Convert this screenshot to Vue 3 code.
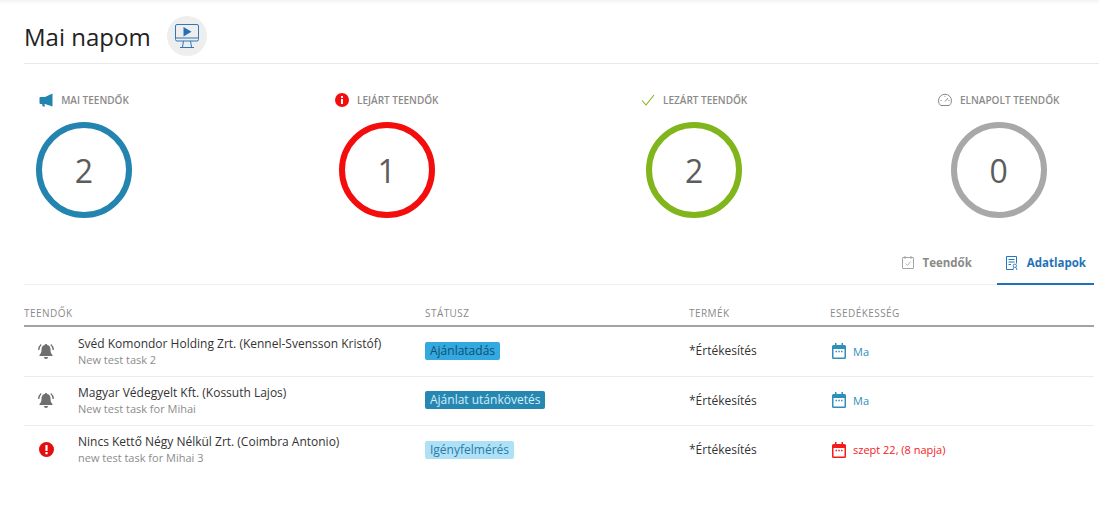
<script setup>
const stats = [
  { label: 'MAI TEENDŐK', value: 2, color: '#2384b0', icon: 'mega' },
  { label: 'LEJÁRT TEENDŐK', value: 1, color: '#f40d0d', icon: 'info' },
  { label: 'LEZÁRT TEENDŐK', value: 2, color: '#80b51b', icon: 'check' },
  { label: 'ELNAPOLT TEENDŐK', value: 0, color: '#a8a8a8', icon: 'gauge' }
]
const rows = [
  { icon: 'bell', name: 'Svéd Komondor Holding Zrt. (Kennel-Svensson Kristóf)', sub: 'New test task 2', status: 'Ajánlatadás', cls: 'b1', due: 'Ma', late: false },
  { icon: 'bell', name: 'Magyar Védegyelt Kft. (Kossuth Lajos)', sub: 'New test task for Mihai', status: 'Ajánlat utánkövetés', cls: 'b2', due: 'Ma', late: false },
  { icon: 'alert', name: 'Nincs Kettő Négy Nélkül Zrt. (Coimbra Antonio)', sub: 'new test task for Mihai 3', status: 'Igényfelmérés', cls: 'b3', due: 'szept 22, (8 napja)', late: true }
]
</script>

<template>
  <div class="page">
    <header class="head">
      <h1>Mai napom</h1>
      <span class="video">
        <svg width="26" height="26" viewBox="0 0 26 26" fill="none" stroke="#2f78b7" stroke-width="1">
          <rect x="1.5" y="1.5" width="23" height="16.5" rx="1.5" />
          <path d="M1.5 15h23M9.5 18l-1 6M16.5 18l1 6M6 24.5h14" />
          <path d="M9.5 4l8 4.8-8 4.8z" fill="#2470b3" stroke="none" />
        </svg>
      </span>
    </header>

    <section class="stats">
      <div v-for="s in stats" :key="s.label" class="stat">
        <div class="stat-label">
          <span class="stat-icon">
            <svg v-if="s.icon === 'mega'" width="14" height="14" viewBox="0 0 14 14">
              <path d="M13.500 .500v13L6 11H1.500A1 1 0 0 1 .500 10V5a1 1 0 0 1 1-1H6z" fill="#2384b0" />
              <path d="M3 11h2.400l.6 2.400H3.800z" fill="#2384b0" />
            </svg>
            <svg v-else-if="s.icon === 'info'" width="14" height="14" viewBox="0 0 14 14">
              <circle cx="7" cy="7" r="7" fill="#f40d0d" />
              <rect x="6" y="6" width="2" height="5" fill="#fff" />
              <rect x="6" y="3" width="2" height="2" fill="#fff" />
            </svg>
            <svg v-else-if="s.icon === 'check'" width="14" height="14" viewBox="0 0 14 14" fill="none">
              <path d="M1 7.500l4 4.500 8-10" stroke="#80b51b" stroke-width="1.100" />
            </svg>
            <svg v-else width="14" height="14" viewBox="0 0 14 14" fill="none" stroke="#8a8a8a" stroke-width="1">
              <path d="M2.600 12.500h8.800a6.500 6.500 0 1 0-8.800 0z" />
              <path d="M7 8.500l3-3.500" />
              <path d="M2.600 7.500h1M10.400 7.500h1M7 2.800v1" />
            </svg>
          </span>
          <span>{{ s.label }}</span>
        </div>
        <div class="ring" :style="{ borderColor: s.color }">{{ s.value }}</div>
      </div>
    </section>

    <nav class="tabs">
      <a class="tab">
        <svg width="12" height="13" viewBox="0 0 12 13" fill="none" stroke="#a5a5a5">
          <rect x="0.5" y="1.5" width="11" height="11" rx="0.5" />
          <path d="M3 0v3M9 0v3" />
          <path d="M3.500 7.500l2 2 3-4" stroke-width="0.8" />
        </svg>
        Teendők
      </a>
      <a class="tab active">
        <svg width="12" height="14" viewBox="0 0 12 14" fill="none" stroke="#2176bd">
          <path d="M7 13.500H.5V.5h10v7" />
          <path d="M2.500 3.500h6M2.500 6h6M2.500 8.500H5" stroke-width="1.200" />
          <circle cx="8.800" cy="9.800" r="1.700" stroke-width="0.9" />
          <path d="M7.500 11.500L7 14M10 11.500l1 2.500" stroke-width="0.9" />
        </svg>
        Adatlapok
      </a>
    </nav>

    <section class="table">
      <div class="thead">
        <span>TEENDŐK</span>
        <span>STÁTUSZ</span>
        <span>TERMÉK</span>
        <span>ESEDÉKESSÉG</span>
      </div>
      <div v-for="r in rows" :key="r.name" class="row">
        <div class="task">
          <span class="task-icon">
            <svg v-if="r.icon === 'bell'" width="18" height="17" viewBox="0 0 18 17">
              <path d="M9 1c.7 0 1.200.5 1.200 1.100 2.300.5 3.300 2.300 3.300 4.500 0 2.900.6 4.100 2 5.400v1H2.500v-1c1.400-1.300 2-2.500 2-5.400 0-2.200 1-4 3.300-4.500C7.800 1.500 8.300 1 9 1z" fill="#6f6f6f" />
              <path d="M7 14h4a2 2 0 0 1-4 0z" fill="#6f6f6f" />
              <path d="M4.200 1.600C2.800 2.800 1.900 4.400 1.700 7M13.800 1.600c1.400 1.200 2.300 2.800 2.500 5.400" stroke="#6f6f6f" stroke-width="1.300" fill="none" />
            </svg>
            <svg v-else width="15" height="15" viewBox="0 0 15 15">
              <circle cx="7.500" cy="7.500" r="7.500" fill="#e30e0e" />
              <rect x="6.400" y="3" width="2.200" height="6" rx="0.500" fill="#fff" />
              <rect x="6.400" y="10" width="2.200" height="2.200" rx="0.500" fill="#fff" />
            </svg>
          </span>
          <div class="task-text">
            <div class="name">{{ r.name }}</div>
            <div class="sub">{{ r.sub }}</div>
          </div>
        </div>
        <div class="status"><span class="badge" :class="r.cls">{{ r.status }}</span></div>
        <div class="product">*Értékesítés</div>
        <div class="due" :class="{ late: r.late }">
          <svg width="14" height="16" viewBox="0 0 14 16">
            <path d="M3 0h1.500v2h5V0H11v2h1.500A1.500 1.500 0 0 1 14 3.500v11a1.500 1.500 0 0 1-1.500 1.500h-11A1.500 1.500 0 0 1 0 14.500v-11A1.500 1.500 0 0 1 1.500 2H3zM1.500 6v8.500h11V6z" fill="currentColor" fill-rule="evenodd" />
            <path d="M3.500 7.800h1.500v1.500H3.500zM6.300 7.800h1.500v1.500H6.300zM9 7.800h1.500v1.500H9z" fill="currentColor" />
          </svg>
          <span>{{ r.due }}</span>
        </div>
      </div>
    </section>
  </div>
</template>

<style scoped>
.page {
  position: relative;
  width: 1099px;
  height: 517px;
  box-sizing: border-box;
  padding: 0 5px 0 24px;
  overflow: hidden;
  background: #fff;
  font-family: "Open Sans", sans-serif;
  color: #333;
  box-shadow: inset 0 4px 4px -3px rgba(0, 0, 0, 0.08);
}
.head {
  display: flex;
  align-items: center;
  height: 52px;
  margin-right: -5px;
  border-bottom: 1px solid #e8e8e8;
  padding-top: 11px;
}
h1 {
  margin: 0 16px 0 0;
  font-size: 24px;
  font-weight: 400;
  line-height: 30px;
  color: #222;
}
.video {
  display: flex;
  align-items: center;
  justify-content: center;
  width: 40px;
  height: 40px;
  border-radius: 50%;
  background: #eeeeee;
  margin-top: -2px;
}
.stats {
  display: grid;
  grid-template-columns: 299px 306px 297px auto;
  padding: 28px 0 0 12px;
}
.stat {
  display: inline-flex;
  flex-direction: column;
  align-items: center;
  justify-self: start;
}
.stat-label {
  display: flex;
  align-items: center;
  height: 16px;
  font-size: 10px;
  font-weight: 600;
  color: #8a8a8a;
  white-space: nowrap;
}
.stat-icon {
  display: flex;
  width: 22px;
}
.ring {
  display: flex;
  align-items: center;
  justify-content: center;
  width: 96px;
  height: 96px;
  margin-top: 14px;
  box-sizing: border-box;
  border: 6px solid;
  border-radius: 50%;
  font-size: 32px;
  font-weight: 400;
  color: #5c5c5c;
}
.tabs {
  display: flex;
  justify-content: flex-end;
  height: 38px;
  margin-top: 28px;
  border-bottom: 1px solid #eeeeee;
}
.tab {
  display: flex;
  align-items: center;
  gap: 9px;
  padding: 0 8px 6px;
  margin-bottom: -1px;
  font-size: 11.5px;
  font-weight: 700;
  color: #8a8a8a;
}
.tab:first-child {
  margin-right: 17px;
}
.tab.active {
  color: #1f72b8;
  border-bottom: 2px solid #1f72b8;
  padding: 0 8px 4px 9px;
}
.thead,
.row {
  display: grid;
  grid-template-columns: 401px 264px 141px 1fr;
}
.thead {
  align-items: center;
  height: 42px;
  box-sizing: border-box;
  padding-top: 16px;
  border-bottom: 2px solid #a3a3a3;
  font-size: 10px;
  letter-spacing: 0.45px;
  color: #8a8a8a;
}
.row {
  height: 49px;
  box-sizing: border-box;
  padding-bottom: 2px;
  align-items: center;
  border-bottom: 1px solid #ececec;
}
.thead + .row {
  height: 50px;
  padding-bottom: 1px;
}
.row:last-child {
  border-bottom: 0;
}
.task {
  display: flex;
  align-items: center;
}
.task-icon {
  display: flex;
  justify-content: center;
  width: 44px;
  margin-right: 10px;
}
.name {
  font-size: 12px;
  line-height: 17px;
  color: #333;
  white-space: nowrap;
}
.sub {
  font-size: 11px;
  line-height: 16px;
  color: #8c8c8c;
  white-space: nowrap;
}
.status {
  display: flex;
}
.badge {
  padding: 0 5px;
  height: 18px;
  line-height: 18px;
  border-radius: 2px;
  font-size: 12px;
  white-space: nowrap;
}
.b1 {
  background: #34a9e0;
  color: #0d4f72;
}
.b2 {
  background: #2688b2;
  color: #d3edf8;
}
.b3 {
  background: #aee1f6;
  color: #2a7ca6;
}
.product {
  font-size: 12px;
  color: #333;
}
.thead + .row .product {
  padding-bottom: 2px;
}
.due {
  display: flex;
  align-items: center;
  gap: 7px;
  padding-left: 2px;
  font-size: 11px;
  color: #2e8fbb;
}
.due.late {
  color: #f51b1b;
}
</style>
